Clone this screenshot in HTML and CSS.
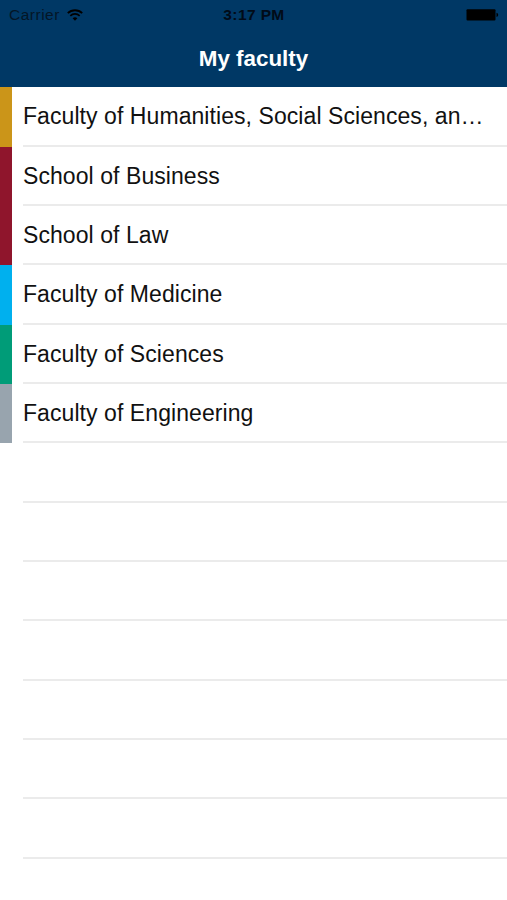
FILE: index.html
```html
<!DOCTYPE html>
<html lang="en">
<head>
    <meta charset="UTF-8">
    <meta name="viewport" content="width=device-width, initial-scale=1.0">
    <title>My faculty</title>
    <link rel="stylesheet" href="styles.css">
</head>
<body>
    <header class="header">
        <div class="status-bar">
            <div class="carrier">
                <span>Carrier</span>
                <svg class="wifi" width="16" height="12" viewBox="0 0 16 12">
                    <path d="M0.8 4.1 A10.4 10.4 0 0 1 15.2 4.1" fill="none" stroke="#000" stroke-width="1.9"/>
                    <path d="M3.3 6.9 A6.7 6.7 0 0 1 12.7 6.9" fill="none" stroke="#000" stroke-width="1.7"/>
                    <path d="M5.6 9.2 A3.6 3.6 0 0 1 10.4 9.2 L8 11.7 Z" fill="#000"/>
                </svg>
            </div>
            <div class="time">3:17 PM</div>
            <div class="battery">
                <svg width="33" height="12" viewBox="0 0 33 12">
                    <rect x="0.5" y="0.3" width="29" height="11.2" rx="1" fill="#000"/>
                    <path d="M30.5 3.8 A2.5 2.2 0 0 1 30.5 8 Z" fill="#000"/>
                </svg>
            </div>
        </div>
        <h1 class="title">My faculty</h1>
    </header>

    <ul class="faculty-list">
        <li class="row gold"><span class="name">Faculty of Humanities, Social Sciences, an…</span></li>
        <li class="row red"><span class="name">School of Business</span></li>
        <li class="row red"><span class="name">School of Law</span></li>
        <li class="row blue"><span class="name">Faculty of Medicine</span></li>
        <li class="row green"><span class="name">Faculty of Sciences</span></li>
        <li class="row gray"><span class="name">Faculty of Engineering</span></li>
        <li class="row"></li>
        <li class="row"></li>
        <li class="row"></li>
        <li class="row"></li>
        <li class="row"></li>
        <li class="row"></li>
        <li class="row"></li>
    </ul>
</body>
</html>
```

FILE: styles.css
```css
* {
    box-sizing: border-box;
}

body {
    margin: 0;
    height: 900px;
    overflow: hidden;
    background-color: #fff;
    color: #111;
    font-family: "Liberation Sans", Helvetica, Arial, sans-serif;
}

.header {
    height: 87.4px;
    background-color: #003865;
}

.status-bar {
    display: grid;
    grid-template-columns: 1fr auto 1fr;
    align-items: center;
    height: 30px;
    padding: 0 8px 0 9px;
    color: #000;
    font-size: 15.5px;
}

.carrier {
    display: flex;
    align-items: center;
    gap: 7px;
    color: #041627;
    letter-spacing: 0.5px;
}

.time {
    font-weight: bold;
    color: #010b18;
    letter-spacing: 0.4px;
}

.battery {
    display: flex;
    justify-content: flex-end;
}

.title {
    margin: 0;
    padding-top: 15px;
    color: #fff;
    font-size: 22.4px;
    font-weight: bold;
    line-height: 27px;
    text-align: center;
}

.faculty-list {
    margin: 0;
    padding: 0;
    list-style: none;
}

.row {
    display: flex;
    height: 59.33px;
    padding-left: 11px;
    border-left: 12px solid transparent;
    background: linear-gradient(#ebebeb, #ebebeb) 11px 100% / 100% 2px no-repeat;
}

.name {
    font-size: 23px;
    line-height: 59px;
    white-space: nowrap;
    letter-spacing: 0.07px;
}

.gold {
    border-left-color: #cb9519;
}

.red {
    border-left-color: #8f152c;
}

.blue {
    border-left-color: #00b0ee;
}

.green {
    border-left-color: #009c78;
}

.gray {
    border-left-color: #98a4ae;
}
```
